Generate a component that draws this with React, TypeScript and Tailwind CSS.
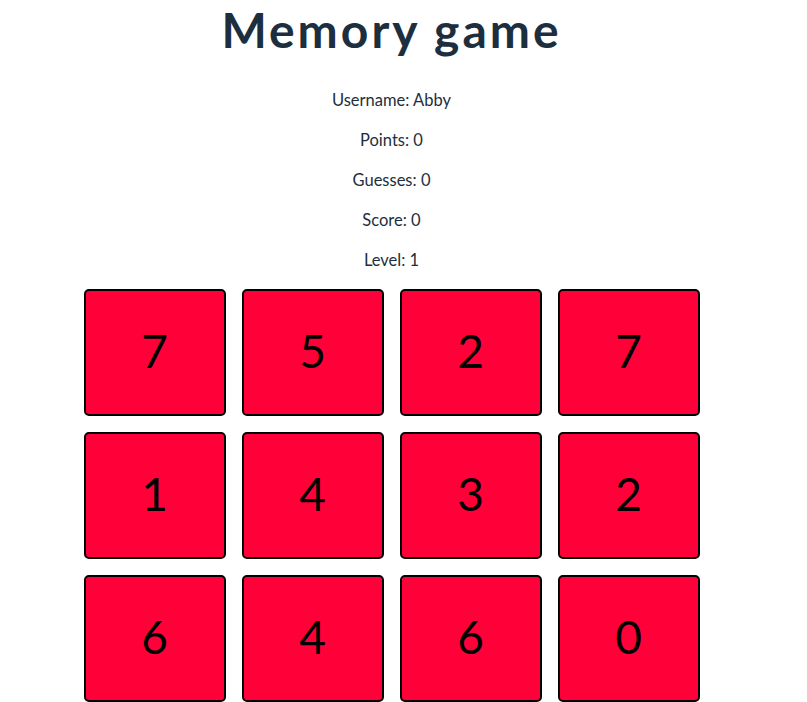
import React from "react";

const cards = [7, 5, 2, 7, 1, 4, 3, 2, 6, 4, 6, 0];

const stats = [
  { label: "Username", value: "Abby" },
  { label: "Points", value: "0" },
  { label: "Guesses", value: "0" },
  { label: "Score", value: "0" },
  { label: "Level", value: "1" },
];

export default function App() {
  return (
    <div
      className="w-[783px] flex flex-col items-center bg-white text-[#1d2f3e] pt-[6px]"
      style={{ fontFamily: "Lato, 'Noto Sans', sans-serif" }}
    >
      <h1 className="text-[48px] leading-[48px] font-bold tracking-[3px]">
        Memory game
      </h1>
      <div className="flex flex-col items-center gap-4 mt-[34px]">
        {stats.map((s) => (
          <p key={s.label} className="text-[16.5px] leading-6">
            {s.label}: {s.value}
          </p>
        ))}
      </div>
      <div className="grid grid-cols-[repeat(4,142px)] gap-4 mt-[17px]">
        {cards.map((n, i) => (
          <div
            key={i}
            className="h-[127px] bg-[#ff0038] border-2 border-black rounded-[5px] flex items-center justify-center text-black text-[46px] pb-[4px]"
          >
            {n}
          </div>
        ))}
      </div>
    </div>
  );
}
